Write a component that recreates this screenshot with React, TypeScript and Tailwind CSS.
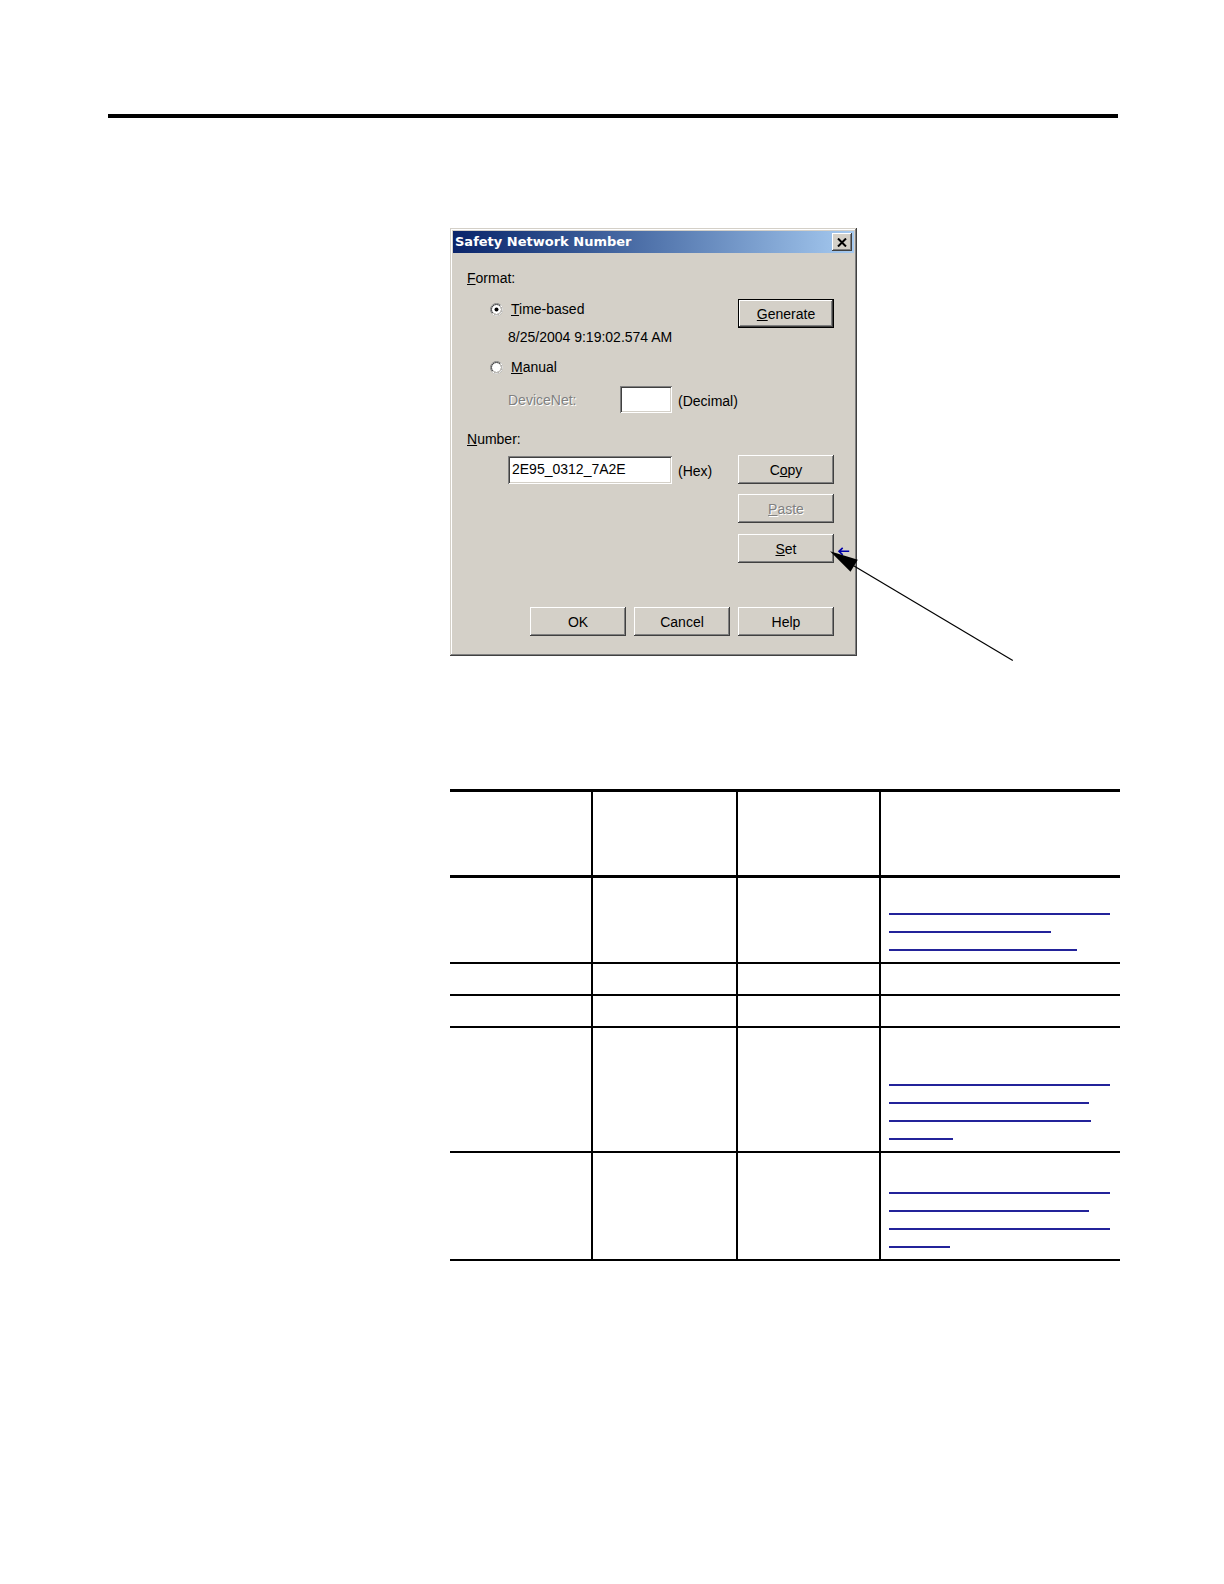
import React from 'react';

const raised =
  'shadow-[inset_-1px_-1px_0_#404040,inset_1px_1px_0_#ffffff,inset_-2px_-2px_0_#808080,inset_2px_2px_0_#d4d0c8]';
const sunken =
  'shadow-[inset_1px_1px_0_#808080,inset_-1px_-1px_0_#ffffff,inset_2px_2px_0_#404040,inset_-2px_-2px_0_#d4d0c8]';

function Btn({
  children,
  disabled,
  isDefault,
}: {
  children: React.ReactNode;
  disabled?: boolean;
  isDefault?: boolean;
}) {
  return (
    <div
      className={`w-[96px] h-[29px] shrink-0 bg-[#d4d0c8] flex items-center justify-center text-[14px] leading-[16px] ${raised} ${
        isDefault ? 'border border-black' : ''
      } ${disabled ? 'text-[#808080] [text-shadow:1px_1px_0_#ffffff]' : 'text-black'}`}
    >
      {children}
    </div>
  );
}

function Radio({ checked }: { checked?: boolean }) {
  return (
    <svg width="13" height="13" viewBox="0 0 13 13" className="shrink-0">
      <circle cx="6.5" cy="6.5" r="6" fill="#fff" stroke="#808080" strokeWidth="1" />
      <path d="M2.26 10.74 A6 6 0 0 0 10.74 2.26" stroke="#fff" strokeWidth="1" fill="none" />
      <circle cx="6.5" cy="6.5" r="5" fill="none" stroke="#404040" strokeWidth="1" />
      <path d="M2.96 10.04 A5 5 0 0 0 10.04 2.96" stroke="#d4d0c8" strokeWidth="1" fill="none" />
      {checked && <circle cx="6.5" cy="6.5" r="2" fill="#000" />}
    </svg>
  );
}

function Line({ w }: { w: number }) {
  return (
    <div className="h-[18px] flex items-end">
      <div className="h-[2px] bg-[#23239a]" style={{ width: w }} />
    </div>
  );
}

const cell = 'border-r-2 border-black';

function Row({
  h,
  thick,
  lines,
  pt,
}: {
  h: number;
  thick?: boolean;
  lines?: number[];
  pt?: number;
}) {
  return (
    <div
      className={`grid grid-cols-[143px_145px_143px_239px] border-black ${
        thick ? 'border-b-[3px]' : 'border-b-2'
      }`}
      style={{ height: h }}
    >
      <div className={cell} />
      <div className={cell} />
      <div className={cell} />
      <div className="pl-[8px]" style={{ paddingTop: pt }}>
        {lines?.map((w, i) => (
          <Line key={i} w={w} />
        ))}
      </div>
    </div>
  );
}

export default function App() {
  return (
    <div className="relative w-full min-h-screen bg-white font-['Liberation_Sans',Arial,sans-serif] flex flex-col">
      <div className="ml-[108px] mt-[114px] w-[1010px] h-[4px] bg-black" />

      {/* dialog */}
      <div className="ml-[450px] mt-[110px] w-[407px] h-[428px] p-[3px] bg-[#d4d0c8] flex flex-col shadow-[inset_-1px_-1px_0_#404040,inset_1px_1px_0_#d4d0c8,inset_-2px_-2px_0_#808080,inset_2px_2px_0_#ffffff]">
        <div className="h-[22px] flex items-center justify-between pl-[2px] pr-[2px] bg-linear-to-r from-[#0a246a] to-[#a6caf0]">
          <span className="text-white font-bold text-[13px] leading-[16px] font-['DejaVu_Sans',sans-serif]">
            Safety Network Number
          </span>
          <div className={`w-[20px] h-[18px] bg-[#d4d0c8] flex items-center justify-center ${raised}`}>
            <svg width="10" height="9" viewBox="0 0 10 9">
              <path d="M1 0.5 L9 8.5 M9 0.5 L1 8.5" stroke="#000" strokeWidth="2" />
            </svg>
          </div>
        </div>

        <div className="flex-1 flex flex-col text-[14px] leading-[16px] text-black">
          <div className="h-[46px] pt-[17px] pl-[14px]">
            <span className="underline">F</span>ormat:
          </div>

          <div className="h-[29px] flex items-start pl-[37px] pr-[20px]">
            <div className="mt-[2px] h-[16px] flex items-center gap-[8px]">
              <Radio checked />
              <span>
                <span className="underline">T</span>ime-based
              </span>
            </div>
            <div className="ml-auto">
              <Btn isDefault>
                <span>
                  <span className="underline">G</span>enerate
                </span>
              </Btn>
            </div>
          </div>

          <div className="h-[30px] pt-[1px] pl-[55px]">8/25/2004 9:19:02.574 AM</div>

          <div className="h-[20px] pt-[1px] pl-[37px]">
            <div className="h-[16px] flex items-center gap-[8px]">
              <Radio />
              <span>
                <span className="underline">M</span>anual
              </span>
            </div>
          </div>

          <div className="mt-[8px] h-[27px] flex items-center pl-[55px]">
            <span className="w-[112px] text-[#808080] [text-shadow:1px_1px_0_#ffffff]">DeviceNet:</span>
            <div className={`w-[52px] h-[27px] bg-white ${sunken}`} />
            <span className="ml-[6px] mt-[2px]">(Decimal)</span>
          </div>

          <div className="h-[42px] pt-[18px] pl-[14px]">
            <span className="underline">N</span>umber:
          </div>

          <div className="h-[29px] flex items-center pl-[55px] pr-[20px]">
            <div className={`w-[164px] h-[28px] mt-[1px] bg-white ${sunken} pl-[4px] flex items-center`}>
              <span className="-mt-[2px]">2E95_0312_7A2E</span>
            </div>
            <span className="ml-[6px] mt-[2px]">(Hex)</span>
            <div className="ml-auto">
              <Btn>
                <span>
                  C<span className="underline">o</span>py
                </span>
              </Btn>
            </div>
          </div>

          <div className="mt-[10px] flex justify-end pr-[20px]">
            <Btn disabled>
              <span>
                <span className="underline">P</span>aste
              </span>
            </Btn>
          </div>

          <div className="mt-[11px] flex justify-end pr-[20px]">
            <Btn>
              <span>
                <span className="underline">S</span>et
              </span>
            </Btn>
          </div>

          <div className="mt-[44px] flex justify-end gap-[8px] pr-[20px]">
            <Btn>OK</Btn>
            <Btn>Cancel</Btn>
            <Btn>Help</Btn>
          </div>
        </div>
      </div>

      {/* table */}
      <div className="ml-[450px] mt-[133px] w-[670px] border-t-[3px] border-black flex flex-col">
        <Row h={86} thick />
        <Row h={86} pt={19} lines={[221, 162, 188]} />
        <Row h={32} />
        <Row h={32} />
        <Row h={125} pt={40} lines={[221, 200, 202, 64]} />
        <Row h={108} pt={23} lines={[221, 200, 221, 61]} />
      </div>

      {/* callout arrow */}
      <svg
        className="absolute left-0 top-0 pointer-events-none"
        width="1100"
        height="700"
        viewBox="0 0 1100 700"
      >
        <path
          d="M839 551.3 L849.2 551.3 M842.7 547.8 L839 551.3 L842.7 554.9"
          stroke="#0000a8"
          strokeWidth="1.6"
          fill="none"
        />
        <line x1="1012.8" y1="660.4" x2="848.2" y2="562.5" stroke="#000" strokeWidth="1.2" />
        <polygon points="830,551.3 857.8,559.7 850.5,571.8" fill="#000" />
      </svg>
    </div>
  );
}
